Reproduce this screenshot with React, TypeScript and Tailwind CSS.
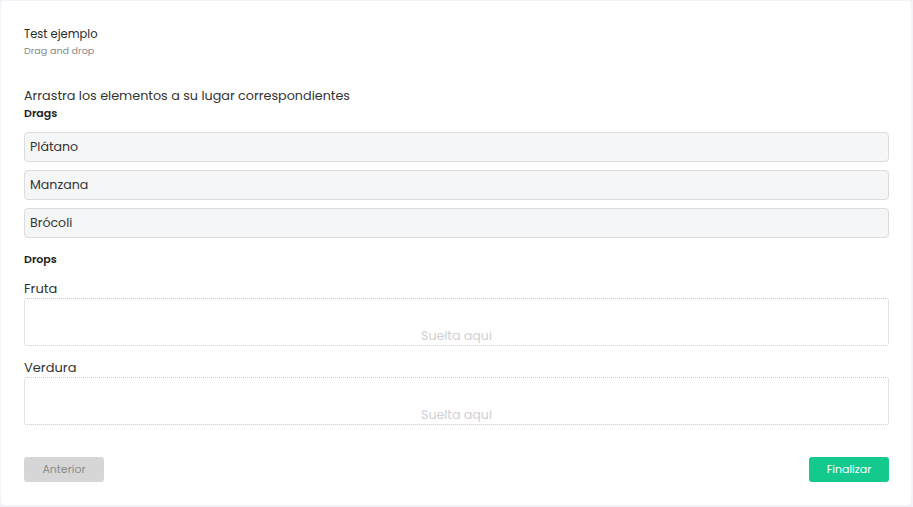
import React from 'react';

const drags = ['Plátano', 'Manzana', 'Brócoli'];
const drops = ['Fruta', 'Verdura'];

export default function App() {
    return (
        <div className="w-[913px] h-[507px] bg-[#f3f2f8] p-px pb-[2px] pr-[2px] font-['Poppins','Open_Sans',sans-serif]">
            <div className="h-full bg-white rounded-[4px] pl-[23px] pr-[22px] pt-[25px] flex flex-col">
                <div className="text-[11.5px] leading-[16px] text-[#2a2a2a]">Test ejemplo</div>
                <div className="text-[9.6px] leading-[16px] text-[#8a8a8a] mt-px">Drag and drop</div>

                <div className="mt-[28px] text-[12.75px] leading-[18px] text-[#333]">Arrastra los elementos a su lugar correspondientes</div>
                <div className="text-[11px] leading-[16px] font-semibold text-[#222]">Drags</div>

                <div className="mt-[11px] flex flex-col gap-[8px]">
                    {drags.map(d => (
                        <div key={d} className="h-[30px] flex items-center px-[5px] bg-[#f5f6f8] border border-[#dcdcdc] rounded-[4px] text-[12.6px] text-[#333]">
                            {d}
                        </div>
                    ))}
                </div>

                <div className="mt-[13px] text-[11px] leading-[16px] font-semibold text-[#222]">Drops</div>

                <div className="mt-[13px] flex flex-col gap-[13px]">
                    {drops.map(d => (
                        <div key={d}>
                            <div className="text-[13px] leading-[18px] text-[#333]">{d}</div>
                            <div className="h-[48px] border border-dotted border-[#c8c8c8] rounded-[3px] flex items-end justify-center">
                                <span className="text-[12.6px] leading-[18px] text-[#cfcfd4]">Suelta aqui</span>
                            </div>
                        </div>
                    ))}
                </div>

                <div className="mt-[32px] flex justify-between">
                    <button className="w-[80px] h-[25px] rounded-[3px] bg-[#d6d6d6] text-[#8c8c8c] text-[11px]">Anterior</button>
                    <button className="w-[80px] h-[25px] rounded-[3px] bg-[#14c98d] text-white text-[11px]">Finalizar</button>
                </div>
            </div>
        </div>
    );
}
